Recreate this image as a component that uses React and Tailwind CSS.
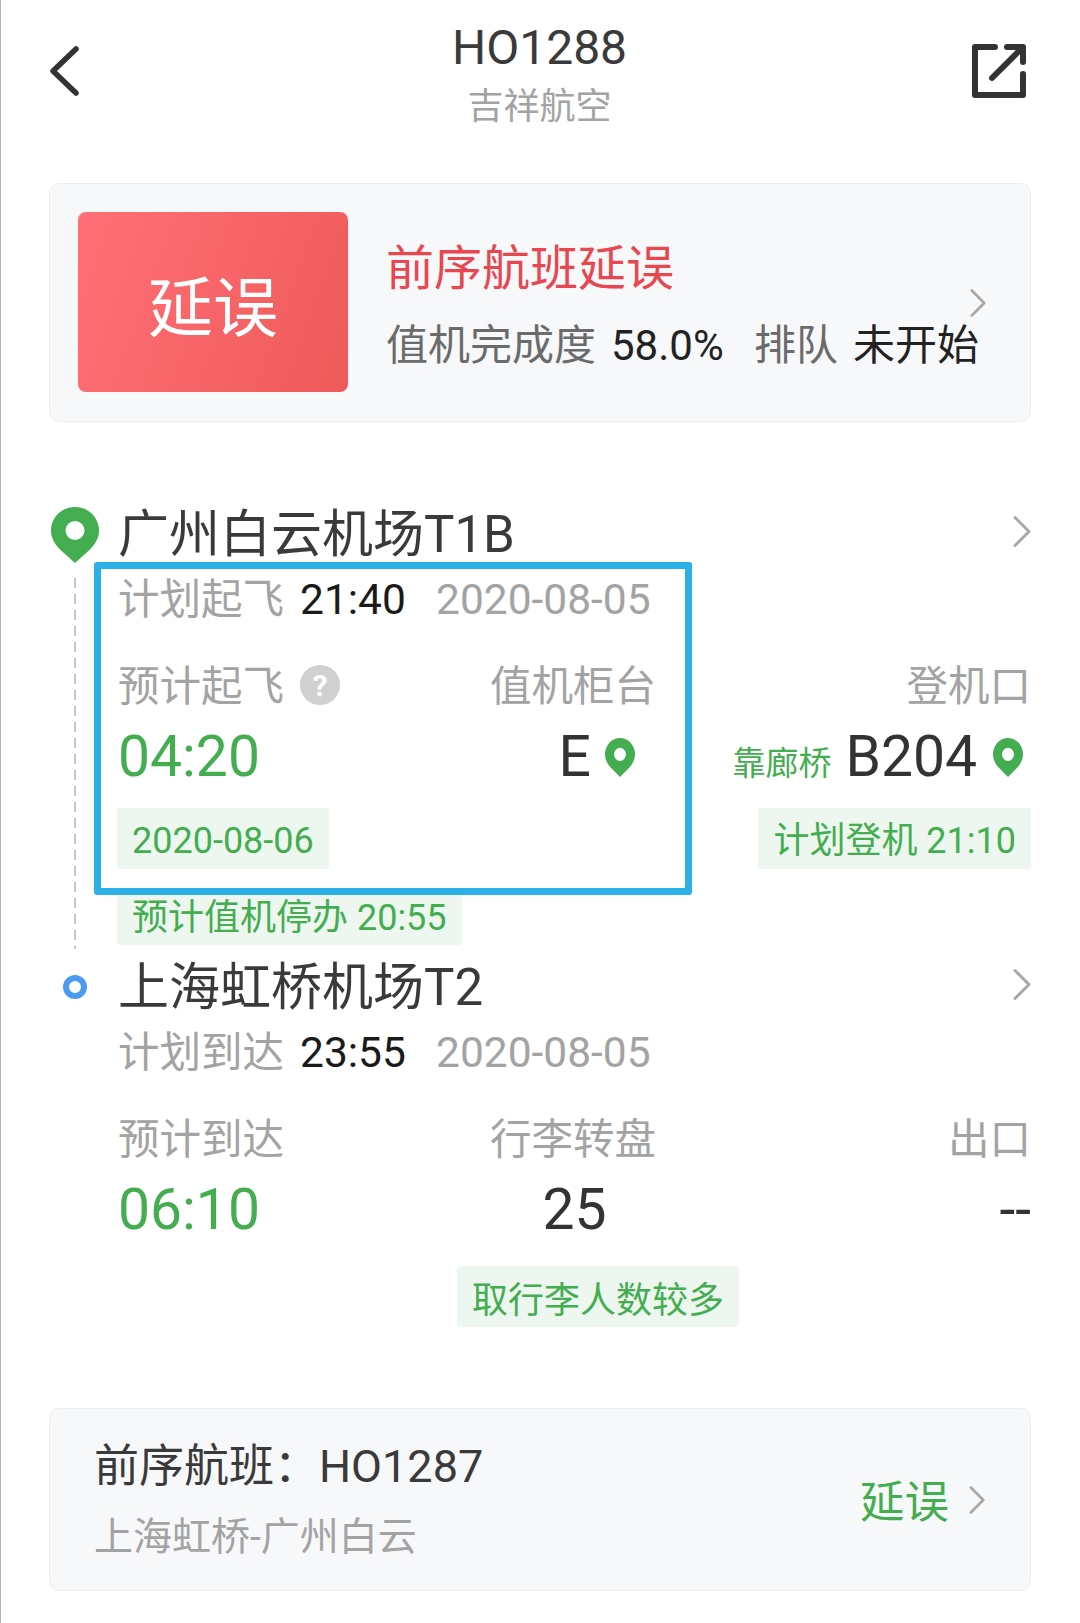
import React from 'react';

function Pin({ className }) {
  return (
    <svg viewBox="0 0 48 56" preserveAspectRatio="none" className={className}>
      <path
        fillRule="evenodd"
        fill="#43ad50"
        d="M24 0C10.7 0 0 10.5 0 23.5c0 8 4 13.6 9 19L24 56l15-13.5c5-5.4 9-11 9-19C48 10.5 37.3 0 24 0zm0 14a9.5 9.5 0 1 1 0 19 9.5 9.5 0 0 1 0-19z"
      />
    </svg>
  );
}

function Chevron({ className, stroke = '#a8a8a8', width = 3 }) {
  return (
    <svg viewBox="0 0 18 32" fill="none" className={className}>
      <path d="M2 2l14 14L2 30" stroke={stroke} strokeWidth={width} strokeLinecap="round" strokeLinejoin="round" />
    </svg>
  );
}

function Tag({ children, className = '' }) {
  return (
    <div className={`h-[61px] w-fit flex items-center px-[15px] pt-[4px] bg-[#edf7ef] rounded-[3px] text-[36px] text-[#43ad50] whitespace-nowrap ${className}`}>
      {children}
    </div>
  );
}

function Schedule({ label, time, date }) {
  return (
    <div className="mt-[11px] h-[48px] flex items-center whitespace-nowrap">
      <span className="text-[#a3a3a3] text-[41.5px] w-[182px]">{label}</span>
      <span className="text-[#1a1a1a] text-[42.5px] w-[136px]">{time}</span>
      <span className="text-[#a3a3a3] text-[42.5px]">{date}</span>
    </div>
  );
}

function Title({ children }) {
  return (
    <div className="h-[60px] flex items-center justify-between">
      <span className="text-[51px] text-[#3a3a3a] whitespace-nowrap">{children}</span>
      <Chevron className="-mt-[8px] w-[18px] h-[33px]" />
    </div>
  );
}

export default function App() {
  return (
    <div
      className="relative w-[1080px] h-[1623px] bg-white overflow-hidden border-l border-[#b5b5b5]"
      style={{ fontFamily: 'Roboto, "Noto Sans CJK SC", sans-serif' }}
    >
      <div className="h-[183px] pl-[48px] pr-[54px] grid grid-cols-[1fr_auto_1fr]">
        <svg viewBox="0 0 30 50" fill="none" className="mt-[46px] w-[30px] h-[50px]">
          <path d="M27 3L4 25l23 22" stroke="#333" strokeWidth="5.5" strokeLinecap="round" strokeLinejoin="round" />
        </svg>
        <div className="flex flex-col items-center pt-[18px] ml-[4px]">
          <div className="h-[60px] leading-[60px] text-[48px] text-[#3a3a3a]">HO1288</div>
          <div className="mt-[2px] h-[54px] leading-[54px] text-[36px] text-[#a3a3a3]">吉祥航空</div>
        </div>
        <svg viewBox="0 0 54 54" fill="none" className="mt-[44px] w-[54px] h-[54px] justify-self-end">
          <path d="M23 3H3v48h48V30" stroke="#333" strokeWidth="6" strokeLinejoin="round" strokeLinecap="round" />
          <path d="M35 3h16v15" stroke="#333" strokeWidth="6" strokeLinejoin="round" strokeLinecap="round" />
          <path d="M47 7L20 34" stroke="#333" strokeWidth="6" strokeLinecap="round" />
        </svg>
      </div>

      <div className="ml-[48px] w-[982px] h-[239px] flex items-center bg-[#f7f8fa] border border-[#eeeeee] rounded-[10px] pl-[28px]">
        <div className="-mt-[2px] w-[270px] h-[180px] pt-[16px] flex items-center justify-center rounded-[8px] bg-[linear-gradient(110deg,#ff7076,#ef5a5a)] text-white text-[65px]">
          延误
        </div>
        <div className="ml-[38px] flex-1 relative">
          <div className="mt-[6px] h-[60px] leading-[60px] text-[48px] text-[#e8474f] mb-[19px] whitespace-nowrap">前序航班延误</div>
          <div className="h-[54px] flex items-center text-[42px] whitespace-nowrap">
            <span className="text-[#6b6b6b] w-[225px]">值机完成度</span>
            <span className="text-[#222] w-[143px]">58.0%</span>
            <span className="text-[#6b6b6b] w-[99px]">排队</span>
            <span className="text-[#222]">未开始</span>
          </div>
          <Chevron className="absolute right-[44px] top-[55px] w-[16px] h-[30px]" />
        </div>
      </div>

      <div className="relative mt-[83px] ml-[47px] w-[983px] flex">
        <div className="w-[70px] shrink-0 flex flex-col pl-[3px]">
          <Pin className="mt-[2px] w-[48px] h-[56px]" />
          <div className="ml-[23px] mt-[15px] -mb-[4px] w-[2px] flex-1 bg-[repeating-linear-gradient(to_bottom,#c6c6c6_0,#c6c6c6_10px,transparent_10px,transparent_16px)]" />
        </div>
        <div className="flex-1">
          <Title>广州白云机场T1B</Title>
          <Schedule label="计划起飞" time="21:40" date="2020-08-05" />
          <div className="grid grid-cols-[372px_165px_1fr] mt-[39px]">
            <div className="h-[48px] flex items-center text-[41.5px] text-[#a3a3a3] whitespace-nowrap">
              预计起飞
              <span className="ml-[16px] -mt-[4px] w-[40px] h-[40px] rounded-full bg-[#d0d0d0] text-white text-[30px] font-bold flex items-center justify-center">?</span>
            </div>
            <div className="h-[48px] flex items-center text-[41.5px] text-[#a3a3a3] whitespace-nowrap">值机柜台</div>
            <div className="h-[48px] flex items-center justify-end text-[41.5px] text-[#a3a3a3] whitespace-nowrap">登机口</div>

            <div className="mt-[13px] h-[66px] flex items-center text-[57px] text-[#43ad50]">04:20</div>
            <div className="mt-[13px] h-[66px] flex items-center justify-end pr-[20px] text-[57px] text-[#333]">
              E
              <Pin className="ml-[14px] w-[30px] h-[39px]" />
            </div>
            <div className="mt-[13px] h-[66px] flex items-center justify-end pr-[8px] text-[#333] whitespace-nowrap">
              <span className="text-[33px] text-[#43ad50] mt-[14px]">靠廊桥</span>
              <span className="ml-[14px] text-[57px]">B204</span>
              <Pin className="ml-[16px] w-[30px] h-[39px]" />
            </div>

            <Tag className="mt-[18px] -ml-[1px]">2020-08-06</Tag>
            <div />
            <Tag className="mt-[18px] justify-self-end">计划登机 21:10</Tag>
          </div>
          <Tag className="mt-[21px] -ml-[1px] !h-[55px] !pt-0">预计值机停办 20:55</Tag>
        </div>
        {/* annotation box drawn on top of the screenshot */}
        <div className="absolute left-[46px] top-[57px] w-[598px] h-[333px] border-[7px] border-[#2bb0e8] rounded-[3px]" />
      </div>

      <div className="relative mt-[13px] ml-[47px] w-[983px] flex">
        <div className="w-[70px] shrink-0 pl-[15px]">
          <div className="mt-[17px] w-[24px] h-[24px] rounded-full border-[6px] border-[#4a9bf0]" />
        </div>
        <div className="flex-1">
          <Title>上海虹桥机场T2</Title>
          <Schedule label="计划到达" time="23:55" date="2020-08-05" />
          <div className="grid grid-cols-[372px_165px_1fr] mt-[39px]">
            <div className="h-[48px] flex items-center text-[41.5px] text-[#a3a3a3] whitespace-nowrap">预计到达</div>
            <div className="h-[48px] flex items-center text-[41.5px] text-[#a3a3a3] whitespace-nowrap">行李转盘</div>
            <div className="h-[48px] flex items-center justify-end text-[41.5px] text-[#a3a3a3] whitespace-nowrap">出口</div>
            <div className="mt-[13px] h-[66px] flex items-center text-[57px] text-[#43ad50]">06:10</div>
            <div className="mt-[13px] h-[66px] flex items-center justify-center pl-[4px] text-[57px] text-[#333]">25</div>
            <div className="mt-[13px] h-[66px] flex items-center justify-end text-[57px] text-[#333]">--</div>
          </div>
          <Tag className="mt-[23px] ml-[339px] !pt-[8px]">取行李人数较多</Tag>
        </div>
      </div>

      <div className="mt-[81px] ml-[48px] w-[982px] h-[183px] flex items-center justify-between bg-[#f7f8fa] border border-[#eeeeee] rounded-[10px] pl-[44px] pr-[45px]">
        <div className="whitespace-nowrap">
          <div className="h-[60px] leading-[60px] text-[45px] text-[#3a3a3a]">前序航班：HO1287</div>
          <div className="mt-[15px] h-[50px] leading-[50px] text-[39px] text-[#a3a3a3]">上海虹桥-广州白云</div>
        </div>
        <div className="flex items-center">
          <span className="mt-[8px] text-[44.5px] text-[#43ad50]">延误</span>
          <Chevron className="ml-[20px] w-[16px] h-[30px]" />
        </div>
      </div>
    </div>
  );
}
